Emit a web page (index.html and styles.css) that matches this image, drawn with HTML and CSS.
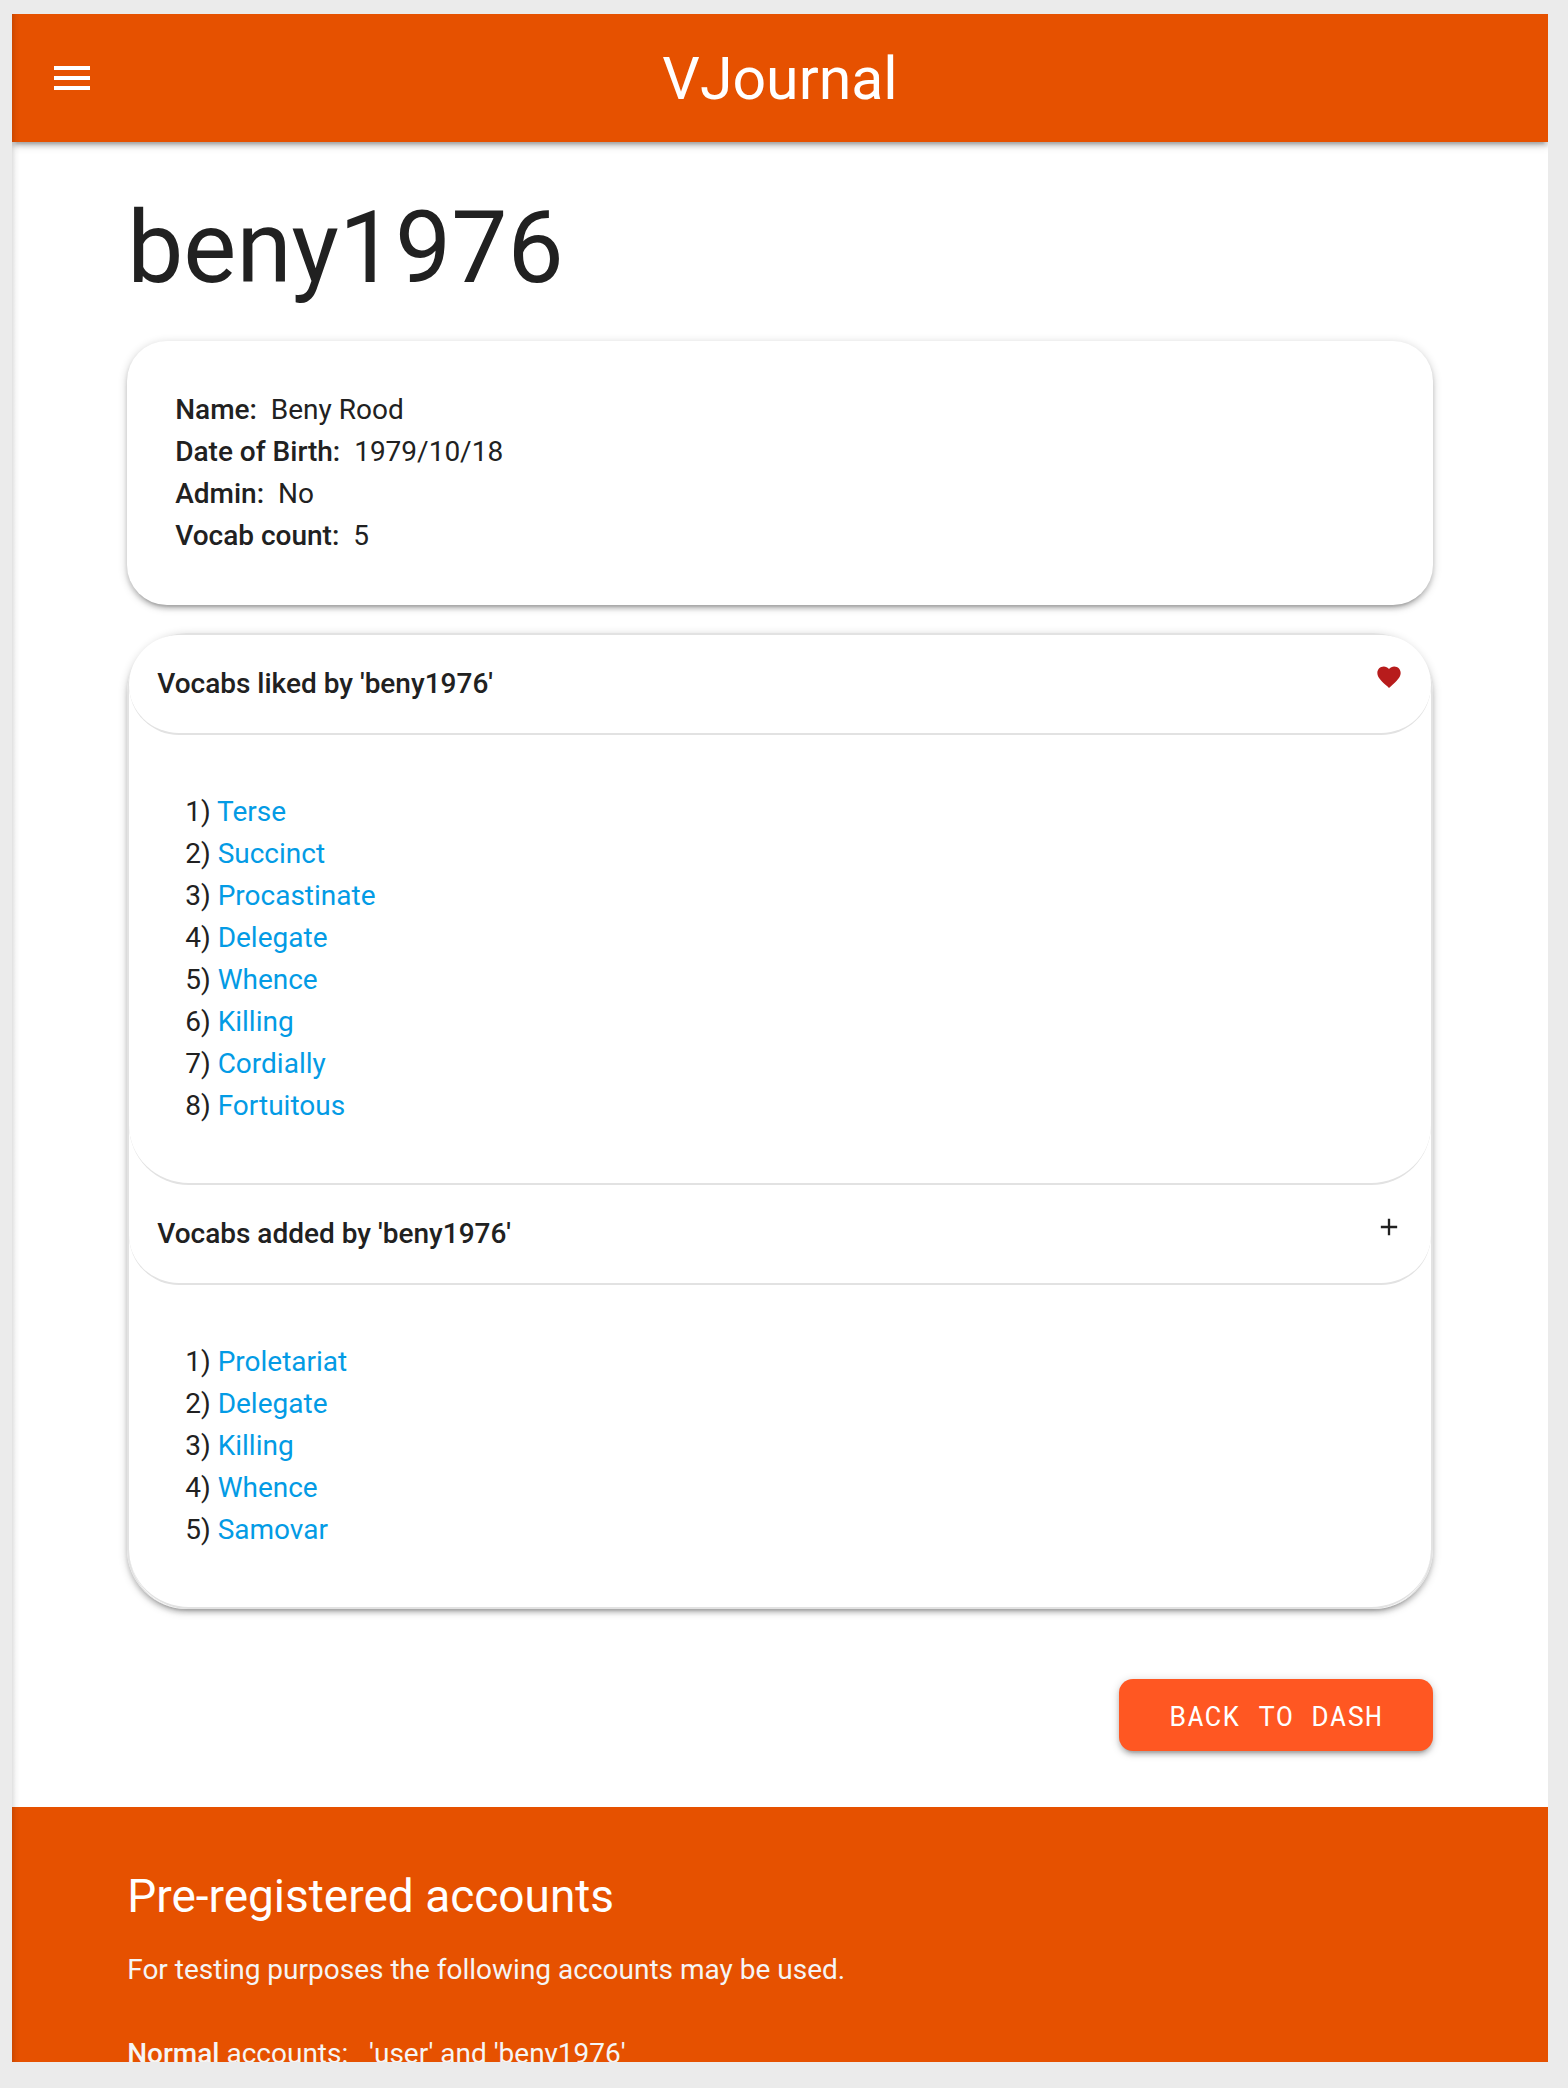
FILE: index.html
```html
<!DOCTYPE html>
<html lang="en">
<head>
<meta charset="utf-8">
<meta name="viewport" content="width=device-width, initial-scale=1">
<title>VJournal</title>
<link rel="stylesheet" href="styles.css">
</head>
<body>
<div class="app">
  <header class="navbar">
    <button class="menu-button" type="button" aria-label="Menu">
      <svg viewBox="0 0 24 24" width="48" height="48" fill="currentColor"><path d="M3 18h18v-2H3v2zm0-5h18v-2H3v2zm0-7v2h18V6H3z"/></svg>
    </button>
    <a class="brand" href="#">VJournal</a>
  </header>

  <main class="container">
    <h1 class="username">beny1976</h1>

    <section class="card">
      <p><strong>Name:</strong>&nbsp; Beny Rood</p>
      <p><strong>Date of Birth:</strong>&nbsp; 1979/10/18</p>
      <p><strong>Admin:</strong>&nbsp; No</p>
      <p><strong>Vocab count:</strong>&nbsp; 5</p>
    </section>

    <section class="panels">
      <h2 class="panel-header">Vocabs liked by 'beny1976'
        <svg class="icon icon-heart" viewBox="0 0 24 24" fill="currentColor"><path d="M12 21.35l-1.45-1.32C5.4 15.36 2 12.28 2 8.5 2 5.42 4.42 3 7.5 3c1.74 0 3.41.81 4.5 2.09C13.09 3.81 14.76 3 16.5 3 19.58 3 22 5.42 22 8.5c0 3.78-3.4 6.86-8.55 11.54L12 21.35z"/></svg>
      </h2>
      <ul class="panel-body">
        <li>1) <a href="#">Terse</a></li>
        <li>2) <a href="#">Succinct</a></li>
        <li>3) <a href="#">Procastinate</a></li>
        <li>4) <a href="#">Delegate</a></li>
        <li>5) <a href="#">Whence</a></li>
        <li>6) <a href="#">Killing</a></li>
        <li>7) <a href="#">Cordially</a></li>
        <li>8) <a href="#">Fortuitous</a></li>
      </ul>
      <h2 class="panel-header">Vocabs added by 'beny1976'
        <svg class="icon" viewBox="0 0 24 24" fill="currentColor"><path d="M19 13h-6v6h-2v-6H5v-2h6V5h2v6h6v2z"/></svg>
      </h2>
      <ul class="panel-body">
        <li>1) <a href="#">Proletariat</a></li>
        <li>2) <a href="#">Delegate</a></li>
        <li>3) <a href="#">Killing</a></li>
        <li>4) <a href="#">Whence</a></li>
        <li>5) <a href="#">Samovar</a></li>
      </ul>
    </section>

    <div class="actions">
      <button class="button" type="button">BACK TO DASH</button>
    </div>
  </main>

  <footer class="footer">
    <div class="container">
      <h2 class="footer-title">Pre-registered accounts</h2>
      <p>For testing purposes the following accounts may be used.</p>
      <p class="account"><strong>Normal</strong> accounts:&nbsp;&nbsp; 'user' and 'beny1976'</p>
    </div>
  </footer>
</div>
</body>
</html>
```

FILE: styles.css
```css
* {
  box-sizing: border-box;
}

:root {
  --line: #e2e2e2;
  --shadow: 0 4px 4px 0 rgba(0, 0, 0, 0.14), 0 6px 2px -4px rgba(0, 0, 0, 0.12), 0 2px 10px 0 rgba(0, 0, 0, 0.2);
}

body {
  margin: 0;
  height: 100vh;
  padding: 14px 20px 26px 12px;
  background: #ebebeb;
  color: #212121;
  font-family: Roboto, "Liberation Sans", sans-serif;
  font-size: 28px;
  line-height: 42px;
}

h1, h2, p, ul {
  margin: 0;
  padding: 0;
}

strong {
  font-weight: 500;
}

a {
  color: #039be5;
  text-decoration: none;
}

.app {
  position: relative;
  height: 100%;
  overflow: hidden;
  background: #fff;
}

/* Shade cast by the closed side menu */
.app::before {
  content: "";
  position: absolute;
  z-index: 2;
  top: 0;
  bottom: 0;
  left: 0;
  width: 8px;
  background: linear-gradient(to right, rgba(0, 0, 0, 0.12), rgba(0, 0, 0, 0.03) 50%, transparent);
  pointer-events: none;
}

.navbar {
  position: relative;
  display: grid;
  grid-template-columns: 1fr auto 1fr;
  grid-template-rows: 128px;
  align-items: center;
  padding: 0 36px;
  background: #e65100;
  color: #fff;
  box-shadow: var(--shadow);
}

.menu-button {
  justify-self: start;
  padding: 0;
  border: 0;
  background: none;
  color: inherit;
}

.menu-button svg {
  display: block;
}

.brand {
  align-self: start;
  color: inherit;
  font-size: 59px;
  line-height: 130px;
}

.container {
  width: 85%;
  margin: 0 auto;
}

.username {
  padding: 51px 0 38px;
  font-size: 100px;
  font-weight: 400;
  line-height: 110px;
}

.card {
  margin-bottom: 28px;
  padding: 48px;
  border-radius: 40px;
  background: #fff;
  box-shadow: var(--shadow);
}

.panels {
  border: 2px solid var(--line);
  border-bottom: 0;
  border-radius: 60px;
  box-shadow: var(--shadow);
}

.panel-header {
  display: flex;
  justify-content: space-between;
  padding: 28px;
  border-bottom: 2px solid var(--line);
  border-radius: 60px;
  background: #fff;
  font-size: 28px;
  font-weight: 500;
}

.icon {
  width: 28px;
  height: 28px;
}

.icon-heart {
  color: #b71c1c;
}

.panel-body {
  padding: 56px;
  border-bottom: 2px solid var(--line);
  border-radius: 60px;
  list-style: none;
}

.actions {
  display: flex;
  justify-content: flex-end;
  padding: 70px 0 56px;
}

.button {
  height: 72px;
  padding: 0 50px;
  border: 0;
  border-radius: 14px;
  background: #ff5722;
  box-shadow: var(--shadow);
  color: #fff;
  font-family: "Roboto Mono", "Liberation Mono", monospace;
  font-size: 28px;
  letter-spacing: 1px;
}

.footer {
  padding: 64px 0 40px;
  background: #e65100;
  color: #f5f5f5;
}

.footer-title {
  margin-bottom: 27px;
  color: #fff;
  font-size: 46px;
  font-weight: 400;
  line-height: 51px;
}

.account {
  margin-top: 42px;
}
```
